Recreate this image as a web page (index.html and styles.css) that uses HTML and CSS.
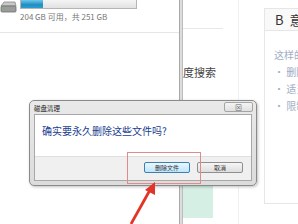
FILE: index.html
```html
<!DOCTYPE html>
<html>
<head>
<meta charset="utf-8">
<link rel="stylesheet" href="styles.css">
</head>
<body>
<div class="screen">
  <div class="left">
    <div class="drive">
      <svg class="hdd" width="17" height="15" viewBox="0 0 17 15">
        <path d="M1 6 L4 2 L15 2 L16 6 Z" fill="#c9c9c9" stroke="#8a8a8a" stroke-width="0.8"/>
        <rect x="1" y="6" width="15" height="6" rx="1" fill="#9c9c9c" stroke="#6f6f6f" stroke-width="0.8"/>
        <rect x="3" y="8" width="2" height="2" fill="#62c162"/>
      </svg>
      <div class="info">
        <div class="bar"><div class="fill" style="width:19%"></div></div>
        <div class="free">204 GB 可用，共 251 GB</div>
      </div>
    </div>
    <div class="sep"></div>
  </div>
  <div class="divider"></div>
  <div class="mid">
    <div class="midline"></div>
    <div class="search">度搜索</div>
    <div class="green"></div>
  </div>
  <div class="gap"></div>
  <div class="panel">
    <div class="phead"><span class="b">B</span><span class="b2">意</span></div>
    <div class="pbody">
      <div class="pt">这样的</div>
      <div class="pt">• 删除</div>
      <div class="pt">• 适当</div>
      <div class="pt">• 限制</div>
    </div>
  </div>

  <div class="dialog">
    <div class="titlebar">
      <span class="title">磁盘清理</span>
      <span class="close">⊠</span>
    </div>
    <div class="client">
      <div class="msg">确实要永久删除这些文件吗?</div>
      <div class="btns">
        <span class="btn focus">删除文件</span>
        <span class="btn">取消</span>
      </div>
    </div>
  </div>
  <div class="mark"></div>
  <svg class="arrow" width="40" height="46" viewBox="0 0 40 46">
    <line x1="6" y1="46" x2="25" y2="12" stroke="#e3342a" stroke-width="2.8"/>
    <polygon points="30,4 20,12 30,17" fill="#e3342a"/>
  </svg>
</div>
</body>
</html>
```
FILE: styles.css
```css
* { box-sizing: border-box; }
html, body { margin: 0; padding: 0; }
body {
  width: 298px; height: 224px; overflow: hidden; background: #fff;
  font-family: "Noto Sans CJK SC", "Liberation Sans", sans-serif;
}
.screen { position: relative; display: flex; width: 298px; height: 224px; overflow: hidden; }
.left { width: 179px; flex: none; }
.drive { display: flex; height: 32px; }
.hdd { flex: none; }
.info { margin-left: 3px; }
.bar {
  width: 117px; height: 9px; border: 1px solid #b5b5b5; border-top: none;
  background: linear-gradient(#f4f4f4, #e2e2e2);
}
.fill { height: 100%; background: linear-gradient(#6fc6ea, #1f8ec2 60%, #2a9fd0); }
.free { font-size: 8px; color: #777; line-height: 10px; margin-top: 3px; white-space: nowrap; }
.sep { height: 1px; background: #e6e6e6; }
.divider {
  width: 4px; flex: none; background: #dcdcdc;
  border-left: 1px solid #a9a9a9; border-right: 1px solid #bdbdbd;
}
.mid { width: 56px; flex: none; border-right: 1px solid #f0f0f0; }
.midline { width: 40px; height: 1px; background: #e8e8e8; margin-top: 28px; }
.search { font-size: 11px; line-height: 11px; color: #444; margin-top: 38px; white-space: nowrap; }
.green { width: 30px; height: 98px; background: #d6efe4; margin-top: 42px; }
.gap { width: 25px; flex: none; }
.panel {
  flex: none; width: 34px; margin-top: 8px; height: 196px;
  border: 1px solid #e6e6e6; border-right: none;
}
.phead {
  height: 22px; background: #f9f9f9; border-bottom: 1px solid #e6e6e6;
  padding-left: 10px; font-size: 13px; line-height: 22px; color: #333;
  white-space: nowrap; overflow: hidden;
}
.b2 { margin-left: 6px; }
.pbody { padding: 15px 0 0 9px; overflow: hidden; }
.pt { font-size: 10px; line-height: 17px; color: #a2aec6; white-space: nowrap; }

.dialog {
  position: absolute; left: 29px; top: 100px; width: 228px; height: 86px;
  border: 1px solid #8a8a8a; border-radius: 5px;
  background: linear-gradient(#e9e9e9, #dcdcdc);
  padding: 0 4px 4px 4px; display: flex; flex-direction: column;
  box-shadow: 1px 1px 3px rgba(0,0,0,0.25);
}
.titlebar { height: 13px; display: flex; justify-content: space-between; align-items: flex-start; }
.title { font-size: 6.5px; line-height: 10px; color: #222; margin-top: 2px; }
.close {
  width: 29px; height: 10px; margin-top: 1px; margin-right: -1px;
  border: 1px solid #a5a5a5; border-radius: 2px; background: linear-gradient(#f4f4f4, #e0e0e0);
  font-size: 7px; line-height: 8px; text-align: center; color: #666;
}
.client { flex: 1; border: 1px solid #a8a8a8; background: #f0f0f0; display: flex; flex-direction: column; }
.msg {
  height: 42px; background: #fff; color: #1a3d8f; font-size: 10px; line-height: 12px;
  padding: 10px 0 0 7px; border-bottom: 1px solid #dfdfdf;
}
.btns { display: flex; justify-content: flex-end; gap: 7px; padding: 5px 8px 0 0; }
.btn {
  width: 46px; height: 11px; border: 1px solid #8f8f8f; border-radius: 2px;
  background: linear-gradient(#f6f6f6, #dedede); font-size: 6px; line-height: 9px;
  text-align: center; color: #333;
}
.btn.focus { border-color: #3c7fb1; background: linear-gradient(#eaf6fd, #bee6fd); }
.mark {
  position: absolute; left: 127px; top: 152px; width: 74px; height: 32px;
  border: 1px solid #e08a8a;
}
.arrow { position: absolute; left: 125px; top: 178px; }
```
